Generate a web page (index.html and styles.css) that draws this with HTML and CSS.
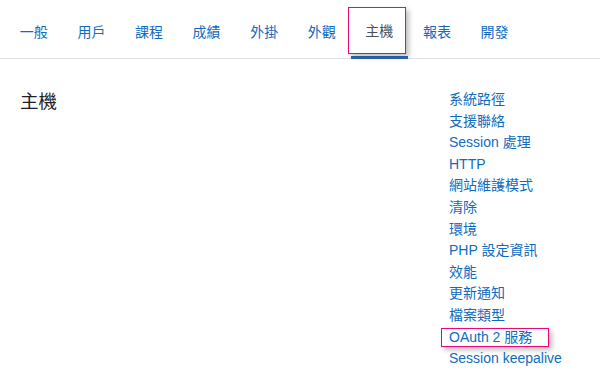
FILE: index.html
```html
<!DOCTYPE html>
<html lang="zh-Hant">
<head>
<meta charset="utf-8">
<link rel="stylesheet" href="styles.css">
</head>
<body>
<nav class="tabs">
  <a class="tab" href="#">一般</a>
  <a class="tab" href="#">用戶</a>
  <a class="tab" href="#">課程</a>
  <a class="tab" href="#">成績</a>
  <a class="tab" href="#">外掛</a>
  <a class="tab" href="#">外觀</a>
  <a class="tab active" href="#">主機<span class="hl hl-tab"></span></a>
  <a class="tab" href="#">報表</a>
  <a class="tab" href="#">開發</a>
</nav>
<main class="content">
  <h2 class="title">主機</h2>
  <ul class="links">
    <li><a href="#">系統路徑</a></li>
    <li><a href="#">支援聯絡</a></li>
    <li><a href="#">Session 處理</a></li>
    <li><a href="#">HTTP</a></li>
    <li><a href="#">網站維護模式</a></li>
    <li><a href="#">清除</a></li>
    <li><a href="#">環境</a></li>
    <li><a href="#">PHP 設定資訊</a></li>
    <li><a href="#">效能</a></li>
    <li><a href="#">更新通知</a></li>
    <li><a href="#">檔案類型</a></li>
    <li class="marked"><a href="#">OAuth 2 服務</a><span class="hl hl-item"></span></li>
    <li><a href="#">Session keepalive</a></li>
  </ul>
</main>
</body>
</html>
```
FILE: styles.css
```css
html, body {
  margin: 0;
  background: #fff;
}
body {
  font-family: "Liberation Sans", "Noto Sans CJK TC", sans-serif;
  color: #1d2125;
  width: 600px;
  height: 390px;
  overflow: hidden;
}
.tabs {
  display: flex;
  padding-left: 5px;
  border-bottom: 1px solid #dee2e6;
  height: 59px;
  box-sizing: border-box;
}
.tab {
  position: relative;
  display: flex;
  align-items: center;
  padding: 6px 14.8px 0 14.8px;
  height: 58px;
  box-sizing: border-box;
  font-size: 14px;
  color: #0f6cbf;
  text-decoration: none;
  border-bottom: 3px solid transparent;
}
.tab.active {
  color: #495057;
  border-bottom-color: #2f6bb3;
  margin-bottom: -1px;
  height: 59px;
  padding-top: 4px;
}
.hl {
  position: absolute;
  border: 1.5px solid #e8087a;
  box-shadow: 3px 3px 5px rgba(0, 0, 0, 0.25);
  pointer-events: none;
}
.hl-tab {
  left: -3px;
  top: 7px;
  width: 56px;
  height: 45px;
}
.content {
  display: flex;
  justify-content: space-between;
  padding: 0 20px 0 20px;
}
.title {
  margin: 28px 0 0 0;
  font-size: 18.5px;
  font-weight: 400;
  color: #1d2125;
}
.links {
  list-style: none;
  margin: 30px 20px 0 0;
  padding: 0;
  width: 111px;
  font-size: 14px;
  line-height: 21.6px;
}
.links a {
  color: #0f6cbf;
  text-decoration: none;
  white-space: nowrap;
}
.marked {
  position: relative;
}
.hl-item {
  left: -8px;
  top: 1px;
  width: 106px;
  height: 17px;
}
```
